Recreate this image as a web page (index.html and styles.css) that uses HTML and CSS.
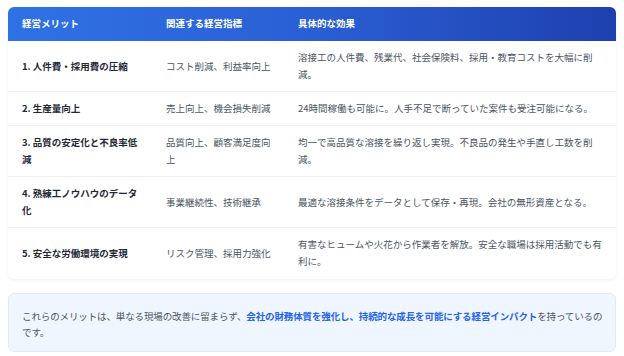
FILE: index.html
```html
<!DOCTYPE html>
<html lang="ja">
<head>
<meta charset="utf-8">
<link rel="stylesheet" href="styles.css">
</head>
<body>
<div class="card">
  <table class="merit">
    <thead>
      <tr>
        <th class="c1">経営メリット</th>
        <th class="c2">関連する経営指標</th>
        <th class="c3">具体的な効果</th>
      </tr>
    </thead>
    <tbody>
      <tr>
        <td class="name">1. 人件費・採用費の圧縮</td>
        <td>コスト削減、利益率向上</td>
        <td>溶接工の人件費、残業代、社会保険料、採用・教育コストを大幅に削減。</td>
      </tr>
      <tr>
        <td class="name">2. 生産量向上</td>
        <td>売上向上、機会損失削減</td>
        <td>24時間稼働も可能に。人手不足で断っていた案件も受注可能になる。</td>
      </tr>
      <tr>
        <td class="name">3. 品質の安定化と不良率低減</td>
        <td>品質向上、顧客満足度向上</td>
        <td>均一で高品質な溶接を繰り返し実現。不良品の発生や手直し工数を削減。</td>
      </tr>
      <tr>
        <td class="name">4. 熟練工ノウハウのデータ化</td>
        <td>事業継続性、技術継承</td>
        <td>最適な溶接条件をデータとして保存・再現。会社の無形資産となる。</td>
      </tr>
      <tr>
        <td class="name">5. 安全な労働環境の実現</td>
        <td>リスク管理、採用力強化</td>
        <td>有害なヒュームや火花から作業者を解放。安全な職場は採用活動でも有利に。</td>
      </tr>
    </tbody>
  </table>
</div>
<div class="note">
  <p>これらのメリットは、単なる現場の改善に留まらず、<strong>会社の財務体質を強化し、持続的な成長を可能にする経営インパクト</strong>を持っているのです。</p>
</div>
</body>
</html>
```

FILE: styles.css
```css
html, body {
  margin: 0;
  padding: 0;
  background: #ffffff;
}
body {
  padding: 7px 8px 0 8px;
  font-family: "Noto Sans CJK JP", "Noto Sans", sans-serif;
  font-size: 9.5px;
  line-height: 17px;
  color: #4b5563;
}
.card {
  border-radius: 6px;
  overflow: hidden;
  background: #ffffff;
  box-shadow: 0 1px 3px rgba(0, 0, 0, 0.06);
}
.merit {
  width: 100%;
  border-collapse: collapse;
  table-layout: fixed;
}
.merit thead tr {
  background: linear-gradient(90deg, #2f72e4 0%, #2a5fd4 50%, #1e40af 100%);
}
.merit th {
  text-align: left;
  color: #ffffff;
  font-weight: 700;
  padding: 8px 8px 9px 14px;
}
.c1 { width: 122px; }
.c2 { width: 110px; }
.merit td {
  padding: 8px 14px 8px 14px;
  vertical-align: middle;
  border-bottom: 1px solid #eef0f3;
}
.merit td:nth-child(1),
.merit td:nth-child(2) {
  padding-right: 8px;
}
.merit tbody tr:last-child td {
  border-bottom: none;
  padding-bottom: 9px;
}
.merit td.name {
  font-weight: 700;
  color: #1f2937;
}
.note {
  margin-top: 14px;
  background: #eff6ff;
  border: 1px solid #dbeafe;
  border-radius: 6px;
  padding: 14px 8px 11px 13px;
}
.note p {
  margin: 0;
  line-height: 16px;
  letter-spacing: -0.12px;
}
.note strong {
  color: #2563eb;
  font-weight: 700;
}
```
